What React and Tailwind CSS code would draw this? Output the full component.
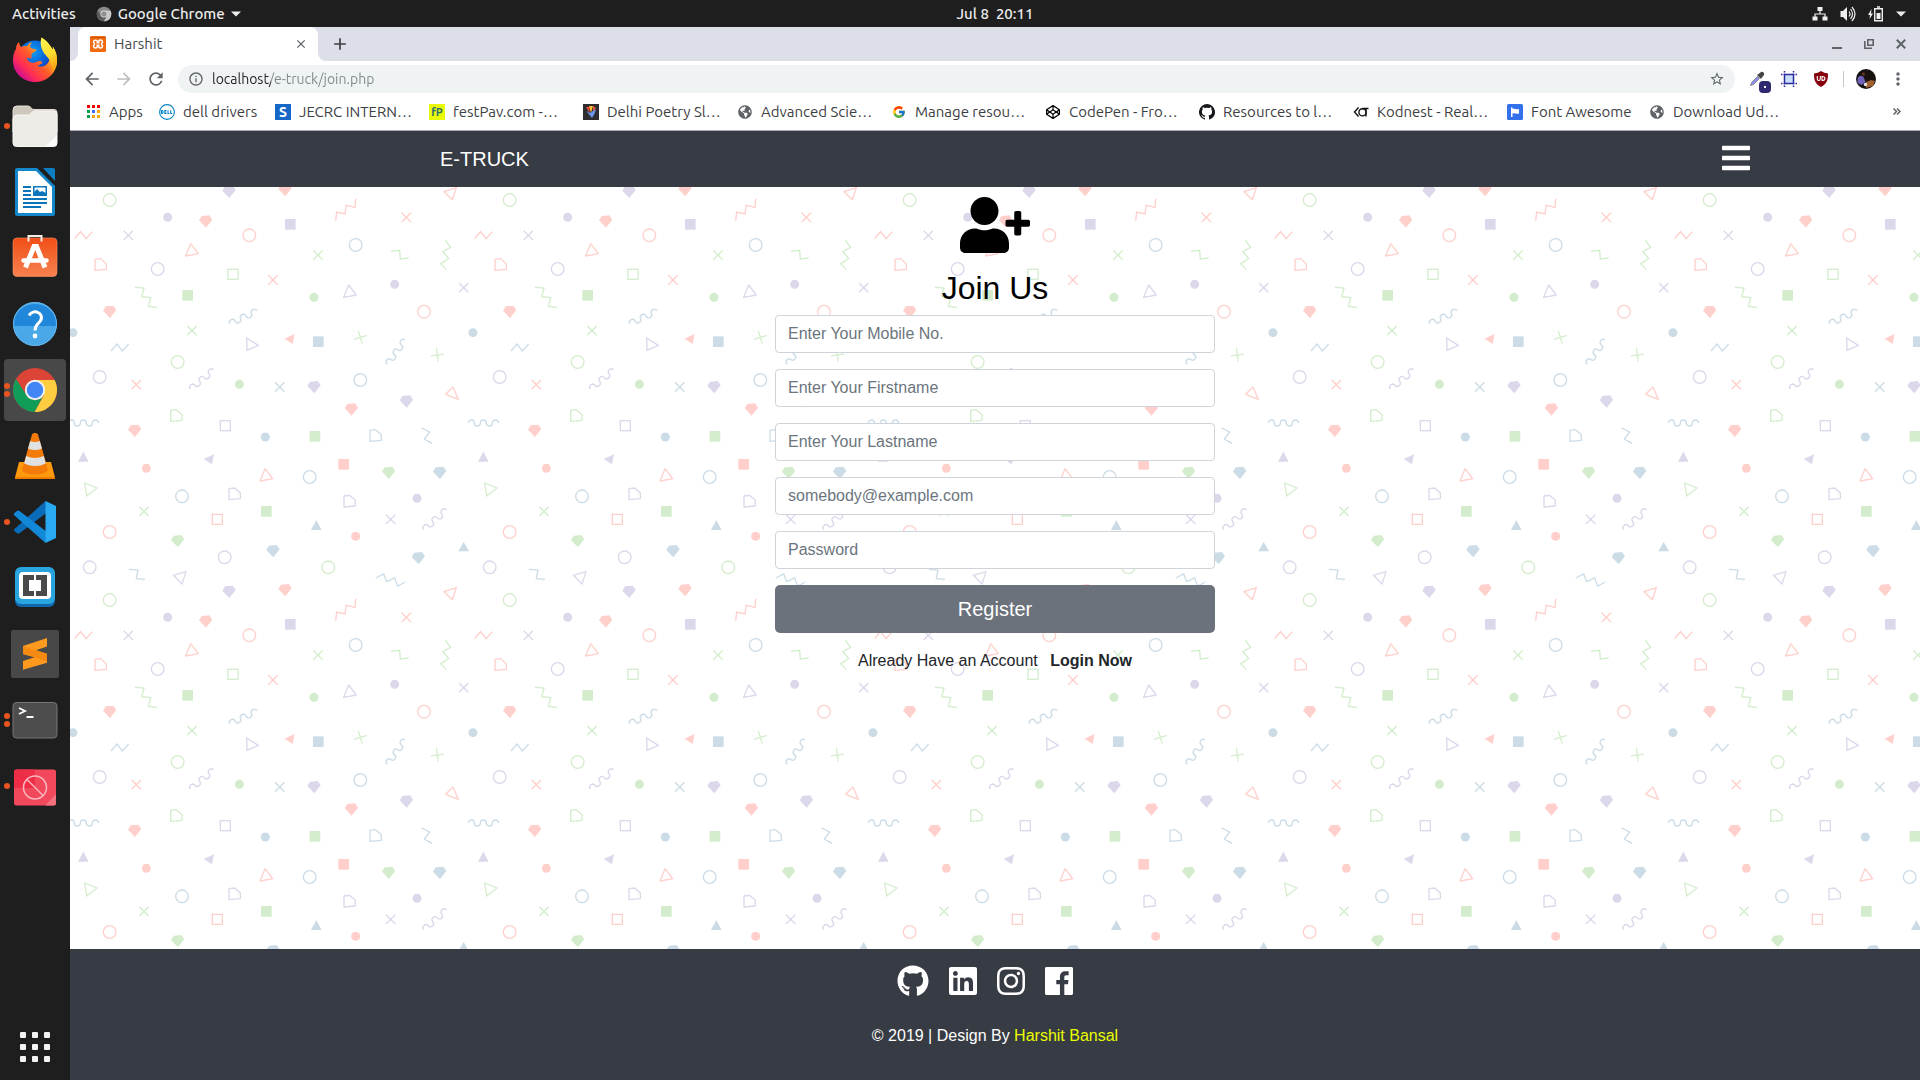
import React from "react";
import { FaBars, FaGithub, FaInstagram, FaLinkedin, FaUserPlus, FaGlobeAmericas, FaCodepen } from "react-icons/fa";
import { MdArrowBack, MdArrowForward, MdRefresh, MdInfoOutline, MdStarBorder, MdMoreVert, MdClose, MdAdd } from "react-icons/md";
import { FcGoogle } from "react-icons/fc";

/* ---------- page background ---------- */

const C = { r: "#ffcfcb", g: "#d3edcc", b: "#cbdce7", p: "#dcd7ea" };

const rings = [
  ["g", 119, 42], ["r", 538, 148], ["b", 857, 177], ["p", 263, 249], ["r", 1062, 377], ["g", 323, 528], ["p", 89, 573],
  ["b", 871, 582], ["b", 719, 873], ["b", 336, 931], ["r", 119, 1038], ["p", 464, 1114], ["p", 59, 1144], ["g", 775, 1144],
];
const dots = [
  ["p", 293, 94], ["g", 732, 334], ["p", 974, 295], ["b", 9, 440], ["g", 508, 595], ["b", 586, 753], ["r", 229, 847],
  ["p", 1041, 937], ["r", 857, 1051],
];
const gems = [
  ["p", 477, 17], ["r", 645, 12], ["r", 407, 106], ["r", 119, 377], ["p", 732, 603], ["p", 1009, 646], ["r", 844, 670],
  ["r", 194, 734], ["g", 956, 860], ["b", 1109, 860], ["g", 323, 1065], ["b", 609, 1095], ["b", 1045, 1116],
];
const squares = [["p", 661, 115], ["g", 353, 328], ["b", 745, 467], ["g", 735, 751], ["r", 821, 835], ["g", 589, 976]];
const boxes = [["g", 489, 265], ["p", 466, 719], ["r", 442, 1000]];
const crosses = [
  ["p", 175, 148, 0], ["r", 1009, 94, 0], ["g", 744, 207, 0], ["r", 609, 282, 0], ["p", 1181, 305, 0], ["g", 366, 434, 0],
  ["g", 871, 454, 27], ["g", 1102, 507, 37], ["r", 199, 596, 0], ["b", 629, 603, 0], ["g", 222, 976, 0], ["p", 962, 1000, 0],
];
const pents = [["r", 92, 236], ["g", 319, 689], ["b", 917, 749], ["p", 494, 924], ["p", 839, 946]];
const triLines = [
  ["r", "362,173 385,203 347,210"], ["p", "836,297 859,327 821,334"], ["r", "585,848 608,878 570,885"],
  ["r", "1149,603 1165,640 1127,625"], ["g", "44,891 81,906 50,930"], ["p", "530,456 565,478 531,493"],
  ["r", "1122,17 1159,5 1147,41"], ["p", "310,1168 348,1157 336,1194"],
];
const triFills = [
  ["r", "643,458 674,444 668,474"], ["p", "40,797 56,827 24,827"], ["p", "401,819 432,805 426,835"],
  ["b", "739,1002 755,1032 723,1032"], ["b", "1181,1068 1197,1096 1165,1096"],
];
const zigzags = [
  ["r", "14,158 32,137 48,158 67,137"], ["b", "123,495 141,474 157,495 176,474"], ["b", "177,1150 204,1152 199,1178 225,1180"],
  ["g", "195,304 222,306 215,332 242,335 235,361 261,364"], ["g", "963,196 989,193 991,219 1016,216"],
  ["g", "1126,163 1142,184 1119,197 1136,218 1112,233 1129,251"], ["r", "797,104 800,78 825,84 829,58 855,64 857,38"],
  ["b", "1055,726 1079,738 1063,759 1086,772"], ["b", "917,1176 941,1164 950,1187 974,1176 983,1200 1006,1188"],
];
const waves = [["b", -5, 711, 0], ["b", 479, 413, -25], ["p", 361, 609, -39], ["b", 952, 535, -54], ["p", 1061, 1031, -41]];

function Tile() {
  return (
    <g fill="none" strokeWidth="4">
      {rings.map(([c, x, y], i) => <circle key={i} cx={x} cy={y} r="19" stroke={C[c]} />)}
      {dots.map(([c, x, y], i) => <circle key={i} cx={x} cy={y} r="13.5" fill={C[c]} />)}
      {gems.map(([c, x, y], i) => (
        <path key={i} transform={`translate(${x} ${y})`} d="M-20-3-12-16 11-18 20-5 1 19z" fill={C[c]} />
      ))}
      {squares.map(([c, x, y], i) => <rect key={i} x={x - 16} y={y - 16} width="32" height="32" fill={C[c]} />)}
      {boxes.map(([c, x, y], i) => <rect key={i} x={x - 15} y={y - 15} width="30" height="30" stroke={C[c]} />)}
      {crosses.map(([c, x, y, a], i) => (
        <path key={i} transform={`translate(${x} ${y}) rotate(${a})`} d="M-14-14 14 14M14-14-14 14" stroke={C[c]} />
      ))}
      {pents.map(([c, x, y], i) => (
        <path key={i} transform={`translate(${x} ${y})`} d="M-17 17V-16L0-18 17-3V14z" stroke={C[c]} strokeLinejoin="round" />
      ))}
      {triLines.map(([c, p], i) => <polygon key={i} points={p} stroke={C[c]} strokeLinejoin="round" />)}
      {triFills.map(([c, p], i) => <polygon key={i} points={p} fill={C[c]} />)}
      {zigzags.map(([c, p], i) => <polyline key={i} points={p} stroke={C[c]} />)}
      {waves.map(([c, x, y, a], i) => (
        <path
          key={i}
          transform={`translate(${x} ${y}) rotate(${a})`}
          d="M0 0A9 9 0 0 1 18 0A9 9 0 0 0 36 0A9 9 0 0 1 54 0A9 9 0 0 0 72 0A9 9 0 0 1 90 0"
          stroke={C[c]}
        />
      ))}
    </g>
  );
}

function Confetti() {
  return (
    <svg className="absolute inset-0 h-full w-full" aria-hidden="true">
      <defs>
        <pattern id="confetti" width="400" height="400" y="-1" patternUnits="userSpaceOnUse">
          <g transform="scale(0.33333)">
            <Tile />
            <g transform="translate(-1200 0)"><Tile /></g>
            <g transform="translate(1200 0)"><Tile /></g>
            <g transform="translate(0 -1200)"><Tile /></g>
            <g transform="translate(0 1200)"><Tile /></g>
          </g>
        </pattern>
      </defs>
      <rect width="100%" height="100%" fill="url(#confetti)" />
    </svg>
  );
}

/* ---------- dock icons ---------- */

const Icon = ({ children }) => <svg viewBox="0 0 48 48" className="size-12" aria-hidden="true">{children}</svg>;

const Firefox = () => (
  <Icon>
    <defs>
      <linearGradient id="ffBody" x1="0.9" y1="0.1" x2="0.15" y2="0.85">
        <stop offset="0" stopColor="#fff44f" /><stop offset="0.3" stopColor="#ffb020" /><stop offset="0.55" stopColor="#ff5a2a" />
        <stop offset="0.8" stopColor="#ff2d55" /><stop offset="1" stopColor="#d0108f" />
      </linearGradient>
      <radialGradient id="ffGlobe" cx="0.45" cy="0.3" r="0.7">
        <stop offset="0" stopColor="#0ea0f5" /><stop offset="0.6" stopColor="#0a57d0" /><stop offset="1" stopColor="#2b1b80" />
      </radialGradient>
      <linearGradient id="ffTail" x1="0.3" y1="0" x2="0.6" y2="1">
        <stop offset="0" stopColor="#fff44f" /><stop offset="0.5" stopColor="#ffdd30" /><stop offset="1" stopColor="#ff9a10" />
      </linearGradient>
    </defs>
    <circle cx="24" cy="23" r="18.5" fill="url(#ffGlobe)" />
    <path fill="url(#ffBody)" d="M8 6c.4 2.400 1 3.800 2 5 2-1 4-1.200 6-.8C17.400 8 19 6.800 21 6.300c-1.400 1.500-2 3-1.800 4.700 1.600 2 3.800 2 6.200 2.400-.4 2.600-3.400 3-4.600 4.300-.8 1.200.3 3.600-.6 5-1-.8-3-1-4.300-.2 1 2.400 3.200 4.200 5.900 4.300 3.400 0 5-2.700 8-1.600 1.300.5 1.800 1.600 1.400 2.200-1.400 0-3 2-5 2.800 8.500 2 14-4 12-12C37.500 12 31 9 30.500 1.500 38 6 39.500 11 42 13.500c0-1 0-2-.3-3C45 15 46.300 20 46 26c-.8 11.500-10.300 20-21.800 20C11.500 46 2 36.500 2 24.500 2 19.500 3 16 5 13c0-3 1-5.500 3-7z" />
    <path fill="url(#ffTail)" d="M30.500 1.500C37.500 6 39.300 10.500 42 14c0-1.300 0-2.300-.3-3.500C45 15 46.300 20 46 26c-.3 4-2 8-4.500 11 0-3-.3-6-1-8.500-1.300-5.500-5-7.500-8.500-13C29.500 11 29 5.500 30.500 1.500z" />
  </Icon>
);
const Files = () => (
  <Icon>
    <path d="M2 8a4 4 0 0 1 4-4h11c3 0 3 3.500 6 3.500h20a3 3 0 0 1 3 3V30H2z" fill="#cdc8bb" stroke="#e3dfd4" />
    <path d="M2 17a4 4 0 0 1 4-4h11.500c2.500 0 3-4 6-4H42a4 4 0 0 1 4 4v28a3.500 3.500 0 0 1-3.500 3.500h-37A3.500 3.500 0 0 1 2 41z" fill="#ecebe6" stroke="#f8f7f4" />
    <path d="M46 33v8a3.500 3.500 0 0 1-3.500 3.500H34z" fill="#fbfbf9" />
  </Icon>
);
const Writer = () => (
  <Icon>
    <path d="M6 0h20l18 18v28a2 2 0 0 1-2 2H6a2 2 0 0 1-2-2V2a2 2 0 0 1 2-2z" fill="#1487cb" />
    <path d="M7 3h18l16 16v26H7z" fill="#fff" />
    <path d="M32 0h10a2 2 0 0 1 2 2v11z" fill="#0f7dc2" />
    <g fill="#0b76b9">
      <path d="M12 18h8v2h-8zM12 22h8v2h-8zM12 26h8v2h-8zM12 30h24v2H12zM12 34h24v2H12zM12 38h18v2H12z" />
      <path d="M22 18h14v10H22zm1.500 1.500v6.500h11v-6.500z" fillRule="evenodd" />
      <path d="M23 27v-3l3-3 3 3 2-1 4 2v2z" />
    </g>
  </Icon>
);
const Software = () => (
  <Icon>
    <defs><linearGradient id="swBg" x1="0" y1="0" x2="0" y2="1"><stop offset="0" stopColor="#f04e16" /><stop offset="1" stopColor="#f8824f" /></linearGradient></defs>
    <rect x="2" y="4" width="44" height="38.500" rx="4" fill="url(#swBg)" stroke="#f9936a" strokeWidth="0.6" />
    <path d="M17.500 7.500V2h13v5.500" fill="none" stroke="#f6eee9" strokeWidth="2" />
    <g fill="none" stroke="#fff" strokeLinecap="round"><path d="M14.500 33.500 23 12.500h2.500L34 33.500" strokeWidth="5" strokeLinecap="butt" /><path d="M12.500 26.500h23" strokeWidth="4.500" /></g>
  </Icon>
);
const Help = () => (
  <Icon>
    <circle cx="24" cy="24" r="22" fill="#4aa8e8" />
    <path d="M2 26a22 22 0 1 1 44 0z" fill="#2187db" />
    <circle cx="24" cy="24" r="21.500" fill="none" stroke="#66b7ea" />
    <path d="M18 15.500c2-3.500 6-4.500 9-3 4 1.800 4.500 6.500 1.500 9.500-2.500 2.500-4.500 3.500-4.500 8.500" fill="none" stroke="#fff" strokeWidth="3" />
    <circle cx="24" cy="36" r="2.400" fill="#fff" />
  </Icon>
);
const ChromeMark = ({ size, gray = false }) => {
  const c = gray ? ["#8a8a8a", "#c8c8c8", "#5c5c5c", "#8f8f8f", "#e8e8e8"] : ["#db4437", "#ffcd40", "#0f9d58", "#4285f4", "#f1f1f1"];
  return (
    <svg viewBox="0 0 48 48" className={size} aria-hidden="true">
      <circle cx="24" cy="24" r="22" fill={c[0]} />
      <path d="M24 14h19.600A22 22 0 0 1 23.500 46L33 29z" fill={c[1]} />
      <path d="M5 13 15.400 29a10 10 0 0 0 17.200 0L23.500 46A22 22 0 0 1 5 13z" fill={c[2]} />
      <circle cx="24" cy="24" r="10.200" fill={c[4]} />
      <circle cx="24" cy="24" r="8.200" fill={c[3]} />
    </svg>
  );
};
const Chrome = () => <ChromeMark size="size-12" />;
const Vlc = () => (
  <Icon>
    <path d="M8 30h32l4 15.500a1.500 1.500 0 0 1-1.500 1.500h-37A1.500 1.500 0 0 1 4 45.500z" fill="#ff9a0c" />
    <path d="M4 45h40v2H4z" fill="#f07c00" />
    <path d="M21 2.500c1-2 5-2 6 0L37 38c-3 6-23 6-26 0z" fill="#f47b0a" />
    <path d="M19.200 9q4.800 2 9.600 0l2.200 7.500q-7 3-14 0zM15.200 24q8.800 4 17.600 0l2 7.500q-10.800 5-21.600 0z" fill="#dfe1e3" />
  </Icon>
);
const VsCode = () => (
  <Icon>
    <path d="M3 31.500 34.500 3l2 11L8.500 35.300a2 2 0 0 1-2.400 0L3.500 33a1.500 1.500 0 0 1-.5-1.500z" fill="#0a6cb8" />
    <path d="M3 15.500 6 13a2 2 0 0 1 2.500 0L36 34l-1.500 11L3.500 17.500a1.500 1.500 0 0 1-.5-2z" fill="#1289d8" />
    <path d="M34.500 3 45 8v32l-10.500 5z" fill="#29aaf2" />
  </Icon>
);
const Brackets = () => (
  <Icon>
    <rect x="4" y="5" width="40" height="38" rx="6" fill="#0f68ad" /><rect x="4" y="3" width="40" height="37" rx="6" fill="#2aa4df" />
    <rect x="8" y="8" width="32" height="27" rx="4" fill="#fff" />
    <path d="M12 11h11v5h-5v11h5v5H12zM25 11h11v21H25v-5h5V16h-5z" fill="#4a4a4a" />
  </Icon>
);
const Sublime = () => (
  <Icon>
    <rect width="48" height="48" rx="2" fill="#484848" />
    <path d="M36 8v8.500l-11 3.700 11 3.500v9L12 39.800V31l11.500-3.700L12 24v-8z" fill="#ff9a1f" />
    <path d="m23.500 27.300 12.500 4V24l-11-3.800L12 16.500V24z" fill="#f48a12" />
  </Icon>
);
const Terminal = () => (
  <Icon>
    <rect x="2" y="6.500" width="44" height="35.500" rx="3.500" fill="#4d4d4d" stroke="#777" />
    <path d="m8 12 6 3-6 3M15.500 21h7" fill="none" stroke="#fff" strokeWidth="1.800" />
  </Icon>
);
const Blocked = () => (
  <Icon>
    <rect x="3" y="7.500" width="42" height="36" rx="2.500" fill="#f1485c" />
    <path d="M3 26V10a2.500 2.500 0 0 1 2.500-2.500H24V26z" fill="#ee2e49" />
    <path d="M45 32v9a2.500 2.500 0 0 1-2.500 2.500H34z" fill="#f4707f" />
    <circle cx="24" cy="25.500" r="11.500" fill="none" stroke="#fbb6be" strokeWidth="1.500" /><path d="m16 17.500 16 16" stroke="#fbb6be" strokeWidth="1.500" />
  </Icon>
);

const dockApps = [
  { name: "Firefox", icon: Firefox, windows: 0 },
  { name: "Files", icon: Files, windows: 1 },
  { name: "LibreOffice Writer", icon: Writer, windows: 0 },
  { name: "Software", icon: Software, windows: 0 },
  { name: "Help", icon: Help, windows: 0 },
  { name: "Google Chrome", icon: Chrome, windows: 2, active: true },
  { name: "VLC", icon: Vlc, windows: 0 },
  { name: "Visual Studio Code", icon: VsCode, windows: 1 },
  { name: "Brackets", icon: Brackets, windows: 0 },
  { name: "Sublime Text", icon: Sublime, windows: 0 },
  { name: "Terminal", icon: Terminal, windows: 2 },
  { name: "Blocked app", icon: Blocked, windows: 1 },
];

function Dock() {
  return (
    <nav aria-label="Dock" className="flex w-[70px] shrink-0 flex-col items-center gap-1 bg-[#1e1e1e] pt-0.5">
      {dockApps.map(({ name, icon: AppIcon, windows, active }) => (
        <button
          key={name}
          aria-label={name}
          className={active ? "relative flex size-[62px] items-center justify-center rounded-sm bg-[#484848]" : "relative flex size-[62px] items-center justify-center rounded-sm"}
        >
          <span className="absolute left-0 top-1/2 flex -translate-y-1/2 flex-col gap-0.5">
            {Array.from({ length: windows }, (_, i) => <i key={i} className="size-1.5 rounded-full bg-[#e95420]" />)}
          </span>
          <AppIcon />
        </button>
      ))}
      <button aria-label="Show applications" className="mb-[18px] mt-auto grid grid-cols-3 gap-1.5">
        {Array.from({ length: 9 }, (_, i) => <i key={i} className="size-1.5 rounded-[1px] bg-[#f4f4f4]" />)}
      </button>
    </nav>
  );
}

/* ---------- desktop top bar ---------- */

const Caret = () => <svg viewBox="0 0 10 6" className="h-1.5 w-2.5" aria-hidden="true"><path d="M0 .5h10L5 5.500z" fill="#eee" /></svg>;

function TopBar() {
  return (
    <header className="grid h-[27px] grid-cols-[1fr_auto_1fr] items-center bg-[#1e1e1e] text-[15px] leading-5 font-medium text-[#ececec]">
      <div className="flex items-center pl-3">
        <button>Activities</button>
        <button className="ml-5 flex items-center gap-1.5">
          <ChromeMark size="size-4" gray />
          Google Chrome
          <Caret />
        </button>
      </div>
      <button className="ml-[70px] whitespace-pre">Jul 8  20:11</button>
      <button aria-label="System menu" className="flex items-center gap-3 justify-self-end pr-3.5">
        <svg viewBox="0 0 16 14" className="h-3.5 w-4" fill="#eee" aria-hidden="true">
          <path d="M5.500 0h5v4h-5zM.5 9.500h5v4h-5zM10.500 9.500h5v4h-5z" /><path d="M8 4v3M3 10V7h10v3" fill="none" stroke="#eee" strokeWidth="1.200" />
        </svg>
        <svg viewBox="0 0 16 16" className="size-4" fill="#eee" aria-hidden="true">
          <path d="M.5 5H3l4-4v14l-4-4H.5z" /><g fill="none" stroke="#eee" strokeWidth="1.200"><path d="M9 5.500q2 2.500 0 5M10.500 3q4 5 0 10M12 1q6 7 0 14" /></g>
        </svg>
        <svg viewBox="0 0 16 16" className="size-4" aria-hidden="true">
          <path d="M3.500 3 0 9h2l-.5 4L5 7.500H3z" fill="#eee" /><path d="M6.700 2.700h7.600v12H6.700zM9 1h3" fill="none" stroke="#eee" strokeWidth="1.400" /><path d="M8.500 7h4v6h-4z" fill="#eee" />
        </svg>
        <Caret />
      </button>
    </header>
  );
}

/* ---------- browser chrome ---------- */

const Xampp = () => (
  <svg viewBox="0 0 16 16" className="size-4" aria-hidden="true">
    <rect width="16" height="16" rx="1.500" fill="#f26a10" />
    <path d="M0 1.500h16" stroke="#c9530a" />
    <path d="M6.500 4.500a2 2 0 0 0-3 1.200c0 1.100 1 1.300 1 2.300s-1 1.200-1 2.300a2 2 0 0 0 3.700.700V9.200h1.600V11a2 2 0 0 0 3.700-.7c0-1.100-1-1.300-1-2.300s1-1.200 1-2.300a2 2 0 0 0-3.700-.7v1.800H7.200V5z" fill="none" stroke="#fff" strokeWidth="1.500" />
  </svg>
);
const AppsGrid = () => (
  <svg viewBox="0 0 13 13" className="size-[13px]" aria-hidden="true">
    {["#f20000", "#f20000", "#f20000", "#0a9d4c", "#3b6ff5", "#f5a800", "#0a9d4c", "#f5a800", "#f5a800"].map((c, i) => (
      <rect key={i} x={(i % 3) * 5} y={Math.floor(i / 3) * 5} width="3" height="3" fill={c} />
    ))}
  </svg>
);
const Dell = () => (
  <svg viewBox="0 0 16 16" className="size-4" aria-hidden="true">
    <circle cx="8" cy="8" r="7.400" fill="#fff" stroke="#0a85c7" strokeWidth="1.100" />
    <path d="M2.500 6.500v3h1q1.300-1.500 0-3zM7.500 6.500H5.800v3h1.700M5.800 8h1.500M9 6.200v3.300h1.500M11.700 6.200v3.300h1.600" fill="none" stroke="#0a85c7" strokeWidth="1.100" />
  </svg>
);
const Tag = ({ box, children }) => <span className={box}>{children}</span>;
const Poetry = () => (
  <svg viewBox="0 0 16 16" className="size-4" aria-hidden="true">
    <path d="M0 0h16v16H0z" fill="#2e2e30" /><path d="M3 3h3.500v6z" fill="#ef4b3c" /><path d="M6 2h4L8 9z" fill="#fdc02f" /><path d="m10 2 3 2-3 4z" fill="#f0543f" />
    <path d="m3.500 7 3.500 2 6-4-1.500 5L9 14l-3-3.500z" fill="#6b93ee" />
  </svg>
);
const Globe = () => <FaGlobeAmericas className="size-3.5 text-[#5f6368]" aria-hidden="true" />;
const GitCat = () => (
  <svg viewBox="0 0 16 16" className="size-4" fill="#16181b" aria-hidden="true">
    <path d="M8 0a8 8 0 0 0-2.500 15.600c.4.100.5-.2.500-.4v-1.400c-2.200.5-2.700-1-2.700-1-.4-.9-.9-1.200-.9-1.200-.7-.5.100-.5.100-.5.800.1 1.200.8 1.200.8.700 1.200 1.900.9 2.300.7.100-.5.300-.9.500-1.100C4.700 11.300 2.900 10.600 2.900 7.500c0-.9.300-1.600.8-2.100-.1-.2-.4-1 .1-2.100 0 0 .7-.2 2.200.8a7.500 7.500 0 0 1 4 0c1.500-1 2.200-.8 2.200-.8.400 1.100.2 1.900.1 2.100.5.600.8 1.300.8 2.100 0 3.100-1.900 3.700-3.600 3.900.3.300.5.700.5 1.500v2.300c0 .2.100.5.500.4A8 8 0 0 0 8 0z" />
  </svg>
);
const Kodnest = () => (
  <svg viewBox="0 0 16 16" className="size-4" fill="none" stroke="#111" strokeWidth="1.400" aria-hidden="true"><path d="M5.500 3.500 1.500 8l4 4.500M15.500 4.500H9.500M13 5v7.500" /><circle cx="9.500" cy="8.300" r="3.600" /></svg>
);
const FaFlagBox = () => (
  <svg viewBox="0 0 16 16" className="size-4" aria-hidden="true"><rect width="16" height="16" rx="1.500" fill="#3370eb" /><path d="M4 3.500h1.500V13H4zM5.500 5c2-1 4 1 6.500 0v4.500c-2.500 1-4.500-1-6.500 0z" fill="#fff" /></svg>
);

const bookmarks = [
  { label: "Apps", icon: AppsGrid, box: "w-[74px]" },
  { label: "dell drivers", icon: Dell, box: "w-[116px]" },
  { label: "JECRC INTERN…", icon: () => <Tag box="flex size-4 items-center justify-center bg-[#1767c9] text-sm font-bold text-white">S</Tag>, box: "w-[154px]" },
  { label: "festPav.com -…", icon: () => <Tag box="flex size-4 items-center justify-center bg-[#e9fb0a] text-[11px] font-bold text-[#2b6b70]">fP</Tag>, box: "w-[154px]" },
  { label: "Delhi Poetry Sl…", icon: Poetry, box: "w-[154px]" },
  { label: "Advanced Scie…", icon: Globe, box: "w-[154px]" },
  { label: "Manage resou…", icon: () => <FcGoogle className="size-3.5" aria-hidden="true" />, box: "w-[154px]" },
  { label: "CodePen - Fro…", icon: () => <FaCodepen className="size-3.5 text-black" aria-hidden="true" />, box: "w-[154px]" },
  { label: "Resources to l…", icon: GitCat, box: "w-[154px]" },
  { label: "Kodnest - Real…", icon: Kodnest, box: "w-[154px]" },
  { label: "Font Awesome", icon: FaFlagBox, box: "w-[142px]" },
  { label: "Download Ud…", icon: Globe, box: "w-[154px]" },
];

function TabStrip() {
  return (
    <div className="flex h-[34px] items-stretch bg-[#dcdfe7]">
      <span className="w-2 bg-white"><i className="block h-full rounded-br-lg bg-[#dcdfe7]" /></span>
      <div className="flex w-60 items-center gap-2 rounded-t-lg bg-white pl-3 pr-2.5 text-[15px] leading-5 text-[#45494d]">
        <Xampp />
        <span className="flex-1">Harshit</span>
        <button aria-label="Close tab"><MdClose className="size-3.5 text-[#5a5e62]" /></button>
      </div>
      <span className="w-2 bg-white"><i className="block h-full rounded-bl-lg bg-[#dcdfe7]" /></span>
      <button aria-label="New tab" className="ml-1"><MdAdd className="size-5 text-[#3c4043]" /></button>
      <div className="ml-auto flex items-center gap-[22px] pr-3.5 text-[#5f6368]">
        <button aria-label="Minimize"><svg viewBox="0 0 10 10" className="size-2.5"><path d="M0 8h10v2H0z" fill="currentColor" /></svg></button>
        <button aria-label="Restore"><svg viewBox="0 0 10 10" className="size-2.5" fill="none" stroke="currentColor" strokeWidth="1.600"><path d="M3.800.8h5.400v5.400H3.800zM.8 2v7.200H8" /></svg></button>
        <button aria-label="Close window"><svg viewBox="0 0 10 10" className="size-2.5" stroke="currentColor" strokeWidth="2"><path d="m.8.8 8.400 8.400M9.200.8.8 9.200" /></svg></button>
      </div>
    </div>
  );
}

function Toolbar() {
  return (
    <div className="flex h-9 items-center bg-white pl-3 pr-3 text-[#5f6368]">
      <div className="flex items-center gap-3">
        <button aria-label="Back"><MdArrowBack className="size-5" /></button>
        <button aria-label="Forward"><MdArrowForward className="size-5 text-[#bcbec0]" /></button>
        <button aria-label="Reload"><MdRefresh className="size-5" /></button>
      </div>
      <div className="ml-3 flex h-7 flex-1 items-center gap-2 rounded-full bg-[#eff3f4] pl-2.5 pr-2.5">
        <MdInfoOutline className="size-4" aria-hidden="true" />
        <input
          aria-label="Address and search bar"
          defaultValue="localhost/e-truck/join.php"
          className="h-6 flex-1 bg-[linear-gradient(to_right,#202124_59px,#80868b_59px)] bg-clip-text text-sm text-transparent outline-none"
        />
        <button aria-label="Bookmark this tab"><MdStarBorder className="size-4" /></button>
      </div>
      <div className="flex items-center">
        <button aria-label="Color picker" className="relative ml-3.5">
          <svg viewBox="0 0 16 16" className="size-4" aria-hidden="true">
            <path d="m1.500 14.500 1-3 6-6 2 2-6 6z" fill="#8d8ff0" stroke="#888" /><path d="m8 4 4 4 1-1.500L15 4c1-2-1.500-4-3-3L9.500 3z" fill="#444" />
          </svg>
          <i className="absolute left-2.5 top-2.5 flex size-3 items-center justify-center rounded-sm bg-[#2f2a70]"><i className="size-0.5 bg-white" /></i>
        </button>
        <button aria-label="Grid tool" className="ml-4">
          <svg viewBox="0 0 16 16" className="size-4" aria-hidden="true"><path d="M4 4h8v8H4z" fill="#c8defa" /><path d="M0 3.500h16M0 12.500h16M3.500 0v16M12.500 0v16" stroke="#2b2b9c" strokeWidth="1.500" strokeDasharray="1.500 1 11 1" /></svg>
        </button>
        <button aria-label="uBlock Origin" className="ml-4">
          <svg viewBox="0 0 16 16" className="size-4" aria-hidden="true"><path d="M8 0q3 2 7 2.500c0 7-1 10-7 13.500C2 12.500 1 9.500 1 2.500Q5 2 8 0z" fill="#85000c" /><path d="M4.300 5v3q0 1.500 1.500 1.500T7.300 8V5M9 5.500v4q3 0 3-2t-3-2z" fill="none" stroke="#fff" strokeWidth="1.100" /></svg>
        </button>
        <i className="ml-3.5 h-4 w-px bg-[#c4c7ca]" />
        <button aria-label="Profile" className="ml-3">
          <svg viewBox="0 0 20 20" className="size-5 rounded-full" aria-hidden="true">
            <path d="M0 0h20v20H0z" fill="#17110f" /><path d="M1.500 9q3-4 6-1l2 5-4 3-4-2z" fill="#6f62b8" /><circle cx="7.500" cy="5" r="1.500" fill="#6b3a24" /><path d="m10 13 5-2 4 1-2 5-7 2z" fill="#a3602f" /><circle cx="9.500" cy="15.500" r="1.700" fill="#e9e4ee" />
          </svg>
        </button>
        <button aria-label="Menu" className="ml-3"><MdMoreVert className="size-5" /></button>
      </div>
    </div>
  );
}

function BookmarkBar() {
  return (
    <div className="flex h-[34px] items-center border-b border-[#a9abb0] bg-white pb-1 pl-[15px] pr-[19px] text-[15px] leading-5 text-[#3c4043]">
      {bookmarks.map(({ label, icon: Mark, box }) => (
        <a key={label} href="#" className={box}>
          <span className="flex items-center gap-2 whitespace-nowrap">
            <span className="flex w-4 shrink-0 justify-center"><Mark /></span>
            {label}
          </span>
        </a>
      ))}
      <button aria-label="More bookmarks" className="ml-auto">
        <svg viewBox="0 0 8 7" className="h-[7px] w-2" fill="none" stroke="#5f6368" strokeWidth="1.500"><path d="m.5.5 3 3-3 3M4 .5l3 3-3 3" /></svg>
      </button>
    </div>
  );
}

/* ---------- web page ---------- */

const fields = [
  { id: "mobile", type: "tel", text: "Enter Your Mobile No." },
  { id: "firstname", type: "text", text: "Enter Your Firstname" },
  { id: "lastname", type: "text", text: "Enter Your Lastname" },
  { id: "email", type: "email", text: "somebody@example.com" },
  { id: "password", type: "password", text: "Password" },
];

function JoinForm() {
  return (
    <form className="relative mx-auto flex w-[440px] flex-col gap-4 pt-2.5 text-center">
      <div>
        <FaUserPlus className="mx-auto h-14 w-[70px] text-black" aria-hidden="true" />
        <h1 className="mt-4 text-[32px] leading-[38px] text-black">Join Us</h1>
      </div>
      <div className="-mt-2 flex flex-col gap-4">
        {fields.map(({ id, type, text }) => (
          <input
            key={id}
            id={id}
            type={type}
            aria-label={text}
            placeholder={text}
            className="h-[38px] w-full rounded border border-[#ced4da] bg-white px-3 text-base text-[#495057] placeholder:text-[#6c757d]"
          />
        ))}
      </div>
      <button type="submit" className="h-12 rounded-[5px] bg-[#6b727c] text-xl text-white">Register</button>
      <p className="text-base leading-6 text-[#212529]">
        Already Have an Account <a href="#" className="ml-2 font-bold">Login Now</a>
      </p>
    </form>
  );
}

const FacebookSquare = (props) => (
  <svg viewBox="0 0 448 512" fill="currentColor" {...props}>
    <path d="M448 56.700v398.500c0 13.700-11.100 24.700-24.700 24.700H309.100V306.500h58.200l8.700-67.600h-67v-43.200c0-19.600 5.400-32.900 33.500-32.900h35.800v-60.500c-6.200-.8-27.400-2.700-52.200-2.700-51.600 0-87 31.500-87 89.400v49.900h-58.400v67.600h58.400V480H24.700C11.100 480 0 468.900 0 455.300V56.700C0 43.100 11.100 32 24.700 32h398.500c13.700 0 24.800 11.100 24.800 24.700z" />
  </svg>
);

function WebPage() {
  return (
    <div className="flex flex-1 flex-col bg-white font-['Liberation_Sans',Arial,sans-serif]">
      <nav className="flex h-14 items-center justify-between bg-[#373b43] pl-[20%] pr-[170px] text-white">
        <a href="#" className="text-xl">E-TRUCK</a>
        <button aria-label="Toggle navigation" className="pb-0.5"><FaBars className="h-8 w-7" /></button>
      </nav>
      <main className="relative flex-1">
        <Confetti />
        <JoinForm />
      </main>
      <footer className="flex flex-col items-center bg-[#373b43] pb-8 pt-4 text-white">
        <div className="flex">
          <a href="#" aria-label="GitHub" className="mr-5"><FaGithub className="size-8" /></a>
          <a href="#" aria-label="LinkedIn" className="mr-5"><FaLinkedin className="h-8 w-7" /></a>
          <a href="#" aria-label="Instagram" className="mr-5"><FaInstagram className="h-8 w-7" /></a>
          <a href="#" aria-label="Facebook" className="mr-5"><FacebookSquare className="h-8 w-7" /></a>
        </div>
        <p className="mt-[27px] text-base leading-6">
          © 2019 | Design By <a href="#" className="text-[#eaff00]">Harshit Bansal</a>
        </p>
      </footer>
    </div>
  );
}

export default function App() {
  return (
    <div className="flex min-h-screen flex-col font-['Ubuntu','Noto_Sans',sans-serif]">
      <TopBar />
      <div className="flex flex-1">
        <Dock />
        <div className="flex min-w-0 flex-1 flex-col">
          <TabStrip />
          <Toolbar />
          <BookmarkBar />
          <WebPage />
        </div>
      </div>
    </div>
  );
}
